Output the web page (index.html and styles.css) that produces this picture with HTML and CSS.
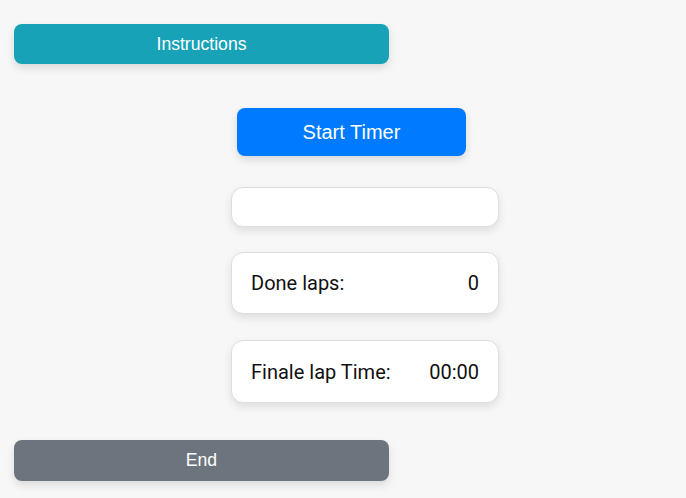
FILE: index.html
```html
<!DOCTYPE html>
<html>
<head>
<meta charset="utf-8">
<link rel="stylesheet" href="styles.css">
</head>
<body>
<div class="page">
  <button class="btn btn-info">Instructions</button>
  <button class="btn btn-start">Start Timer</button>
  <div class="card card-empty"></div>
  <div class="card card-row card-laps"><span>Done laps:</span><span>0</span></div>
  <div class="card card-row card-final"><span>Finale lap Time:</span><span>00:00</span></div>
  <button class="btn btn-end">End</button>
</div>
</body>
</html>
```
FILE: styles.css
```css
html, body {
  margin: 0;
  padding: 0;
  background: #f7f7f7;
}
.page {
  display: flex;
  flex-direction: column;
  align-items: flex-start;
  padding: 24px 14px;
}
.btn {
  border: none;
  color: #fff;
  font-family: "Liberation Sans", Arial, sans-serif;
  border-radius: 8px;
  box-shadow: 0 4px 8px rgba(0,0,0,0.12);
  cursor: pointer;
  padding: 0;
}
.btn-info {
  width: 375px;
  height: 40px;
  background: #17a2b8;
  font-size: 17.6px;
}
.btn-start {
  width: 229px;
  height: 48px;
  margin: 44px 0 0 223px;
  background: #007bff;
  font-size: 20px;
}
.btn-end {
  width: 375px;
  height: 41px;
  margin-top: 37px;
  background: #6c757d;
  font-size: 17.6px;
}
.card {
  box-sizing: border-box;
  width: 268px;
  margin-left: 217px;
  background: #fff;
  border: 1px solid #dddddd;
  border-radius: 12px;
  box-shadow: 0 4px 8px rgba(0,0,0,0.1);
}
.card-empty {
  height: 40px;
  margin-top: 31px;
}
.card-row {
  display: flex;
  justify-content: space-between;
  align-items: center;
  padding: 0 19px 0 19px;
  font-family: Roboto, "Noto Sans", sans-serif;
  font-size: 20px;
  color: #111;
}
.card-laps {
  height: 62px;
  margin-top: 25px;
}
.card-final {
  height: 63px;
  margin-top: 26px;
}
```
